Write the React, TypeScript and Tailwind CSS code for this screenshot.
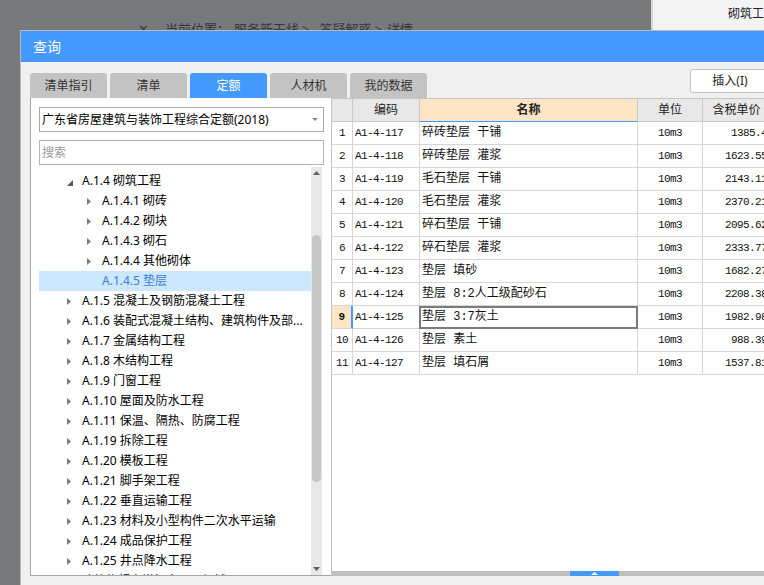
import React from "react";

type TreeItem = {
  level: 1 | 2;
  label: string;
  icon: "open" | "closed" | "none";
  selected?: boolean;
};

const tree: TreeItem[] = [
  { level: 1, label: "A.1.4 砌筑工程", icon: "open" },
  { level: 2, label: "A.1.4.1 砌砖", icon: "closed" },
  { level: 2, label: "A.1.4.2 砌块", icon: "closed" },
  { level: 2, label: "A.1.4.3 砌石", icon: "closed" },
  { level: 2, label: "A.1.4.4 其他砌体", icon: "closed" },
  { level: 2, label: "A.1.4.5 垫层", icon: "none", selected: true },
  { level: 1, label: "A.1.5 混凝土及钢筋混凝土工程", icon: "closed" },
  { level: 1, label: "A.1.6 装配式混凝土结构、建筑构件及部...", icon: "closed" },
  { level: 1, label: "A.1.7 金属结构工程", icon: "closed" },
  { level: 1, label: "A.1.8 木结构工程", icon: "closed" },
  { level: 1, label: "A.1.9 门窗工程", icon: "closed" },
  { level: 1, label: "A.1.10 屋面及防水工程", icon: "closed" },
  { level: 1, label: "A.1.11 保温、隔热、防腐工程", icon: "closed" },
  { level: 1, label: "A.1.19 拆除工程", icon: "closed" },
  { level: 1, label: "A.1.20 模板工程", icon: "closed" },
  { level: 1, label: "A.1.21 脚手架工程", icon: "closed" },
  { level: 1, label: "A.1.22 垂直运输工程", icon: "closed" },
  { level: 1, label: "A.1.23 材料及小型构件二次水平运输", icon: "closed" },
  { level: 1, label: "A.1.24 成品保护工程", icon: "closed" },
  { level: 1, label: "A.1.25 井点降水工程", icon: "closed" },
  { level: 1, label: "建筑物超高增加人工、机械", icon: "none" },
];

const rows = [
  ["A1-4-117", "碎砖垫层 干铺", "1385.4"],
  ["A1-4-118", "碎砖垫层 灌浆", "1623.55"],
  ["A1-4-119", "毛石垫层 干铺", "2143.11"],
  ["A1-4-120", "毛石垫层 灌浆", "2370.21"],
  ["A1-4-121", "碎石垫层 干铺", "2095.62"],
  ["A1-4-122", "碎石垫层 灌浆", "2333.77"],
  ["A1-4-123", "垫层 填砂", "1682.27"],
  ["A1-4-124", "垫层 8:2人工级配砂石", "2208.38"],
  ["A1-4-125", "垫层 3:7灰土", "1982.98"],
  ["A1-4-126", "垫层 素土", "988.39"],
  ["A1-4-127", "垫层 填石屑", "1537.81"],
];

const tabs = ["清单指引", "清单", "定额", "人材机", "我的数据"];

function TreeRow({ item }: { item: TreeItem }) {
  return (
    <div
      className={`flex items-center h-[20px] whitespace-nowrap text-[12px] ${
        item.level === 1 ? "pl-[28px]" : "pl-[48px]"
      } ${item.selected ? "bg-[#cce8ff] text-[#3b7ed8]" : "text-black"}`}
    >
      <span className="w-[15px] flex items-center">
        {item.icon === "closed" && (
          <svg width="4" height="7" viewBox="0 0 4 7">
            <path d="M0 0 L4 3.5 L0 7 Z" fill="#7a7a7a" />
          </svg>
        )}
        {item.icon === "open" && (
          <svg width="6" height="6" viewBox="0 0 6 6" className="mt-[4px]">
            <path d="M6 0 L6 6 L0 6 Z" fill="#5a5a5a" />
          </svg>
        )}
      </span>
      <span>{item.label}</span>
    </div>
  );
}

function LeftPanel() {
  return (
    <div className="w-[301px] bg-white border-l border-b border-[#a5a5a5] pl-[8px] pt-[9px] flex flex-col">
      <div className="w-[285px] h-[25px] border border-[#a9a9a9] flex items-center justify-between pl-[2px] pr-[5px] text-[12px] text-black whitespace-nowrap">
        <span>广东省房屋建筑与装饰工程综合定额(2018)</span>
        <svg width="6" height="3" viewBox="0 0 6 3">
          <path d="M0 0 L6 0 L3 3 Z" fill="#8a8a8a" />
        </svg>
      </div>
      <div className="w-[285px] h-[25px] mt-[8px] border border-[#b4b4b4] flex items-center pl-[2px] text-[12px] text-[#9b9b9b]">
        搜索
      </div>
      <div className="mt-[2px] w-[283px] flex-1 flex overflow-hidden">
        <div className="w-[272px] pt-[4px] overflow-hidden">
          {tree.map((item) => (
            <TreeRow key={item.label} item={item} />
          ))}
        </div>
        <div className="w-[11px] bg-[#e8e8e8] flex flex-col items-center">
          <div className="h-[12px] flex items-center justify-center">
            <svg width="7" height="4" viewBox="0 0 7 4">
              <path d="M0 4 L3.5 0 L7 4 Z" fill="#606060" />
            </svg>
          </div>
          <div className="mt-[56px] w-[9px] h-[247px] rounded-full bg-[#c6c6c6]" />
          <div className="flex-1" />
          <div className="h-[12px] flex items-center justify-center">
            <svg width="7" height="4" viewBox="0 0 7 4">
              <path d="M0 0 L7 0 L3.5 4 Z" fill="#606060" />
            </svg>
          </div>
        </div>
      </div>
    </div>
  );
}

function DataTable() {
  const head = "h-[23px] bg-[#e8e8e8] border-r border-b border-[#c9c9c9] flex items-center justify-center text-[12px] text-[#222]";
  const cell = "h-[23px] border-r border-b border-[#d6d6d6] flex items-center";
  const mono = "font-['Liberation_Mono',monospace] text-[11px] tracking-[-0.6px] text-[#111]";
  return (
    <div className="flex-1 flex flex-col bg-white border-l border-t border-[#c4c4c4]">
      <div className="grid grid-cols-[21px_67px_218px_65px_68px_1fr]">
        <div className={head} />
        <div className={head}>编码</div>
        <div className="h-[23px] bg-[#fde4c4] border-r border-[#c9c9c9] border-b border-b-[#4499ff] flex items-center justify-center text-[12px] font-bold text-[#222]">
          名称
        </div>
        <div className={head}>单位</div>
        <div className={head}>含税单价</div>
        <div className={head} />
        {rows.map(([code, name, price], i) => {
          const active = i === 8;
          return (
            <React.Fragment key={code}>
              <div
                className={`${cell} justify-center ${mono} ${
                  active ? "bg-[#fde4c4] font-bold border-r-2 border-r-[#4499ff]" : ""
                }`}
              >
                {i + 1}
              </div>
              <div className={`${cell} pl-[2px] ${mono}`}>{code}</div>
              <div className={`${cell} relative pl-[2px] text-[12px] text-[#111] whitespace-pre font-['Liberation_Mono','Noto_Sans_CJK_SC',monospace]`}>
                {name}
                {active && (
                  <div className="absolute -left-px top-0 -right-px -bottom-px border-2 border-[#7b7b7b]" />
                )}
              </div>
              <div className={`${cell} justify-center ${mono}`}>10m3</div>
              <div className={`${cell} justify-end pr-[3px] ${mono}`}>{price}</div>
              <div className={cell} />
            </React.Fragment>
          );
        })}
      </div>
      <div className="flex-1" />
      <div className="h-[5px] bg-[#bfbfbf] flex">
        <div className="ml-[238px] w-[49px] bg-[#4499ff] flex items-center justify-center">
          <svg width="7" height="3" viewBox="0 0 7 3">
            <path d="M0 3 L3.5 0 L7 3 Z" fill="#ffffff" />
          </svg>
        </div>
      </div>
    </div>
  );
}

function QueryDialog() {
  return (
    <div className="absolute left-[20px] top-[30px] w-[800px] h-[600px] border-t border-l border-[#b9b9b9] bg-[#f0f0f0] flex flex-col">
      <div className="h-[31px] bg-[#4499ff] text-white text-[14px] flex items-center pl-[12px]">查询</div>
      <div className="h-[36px] pt-[7px] pl-[9px] flex">
        <div className="flex gap-[3px] self-end">
          {tabs.map((t) => (
            <div
              key={t}
              className={`w-[77px] h-[25px] rounded-t-[3px] flex items-center justify-center text-[12px] ${
                t === "定额" ? "bg-[#4499ff] text-white" : "bg-[#c3c3c3] text-[#333]"
              }`}
            >
              {t}
            </div>
          ))}
        </div>
        <div className="ml-[263px] self-start w-[80px] h-[24px] bg-white border border-[#c3c3c3] rounded-[3px] flex items-center justify-center text-[12px] text-[#222]">
          插入(I)
        </div>
      </div>
      <div className="h-[478px] pl-[9px] flex">
        <LeftPanel />
        <DataTable />
      </div>
    </div>
  );
}

export default function App() {
  return (
    <div className="relative w-[764px] h-[585px] overflow-hidden bg-[#77797b] font-['Noto_Sans','Noto_Sans_CJK_SC',sans-serif]">
      <div className="flex h-[30px]">
        <div className="flex-1 flex items-start pt-[21px] pl-[138px] text-[13px] leading-[16px] text-[#34363a] whitespace-nowrap">
          <span className="w-[27px]">✕</span>
          <span>当前位置：</span>
          <span className="ml-[4px]">服务新干线</span>
          <span className="ml-[3px]">&gt;</span>
          <span className="ml-[10px]">答疑解惑</span>
          <span className="ml-[3px]">&gt;</span>
          <span className="ml-[5px]">详情</span>
        </div>
        <div className="w-[113px] bg-[#f3f3f3] border-l-2 border-[#d5d5d5] pl-[75px] pt-[5px] text-[12px] text-[#222] whitespace-nowrap overflow-hidden">
          砌筑工程
        </div>
      </div>
      <QueryDialog />
    </div>
  );
}
